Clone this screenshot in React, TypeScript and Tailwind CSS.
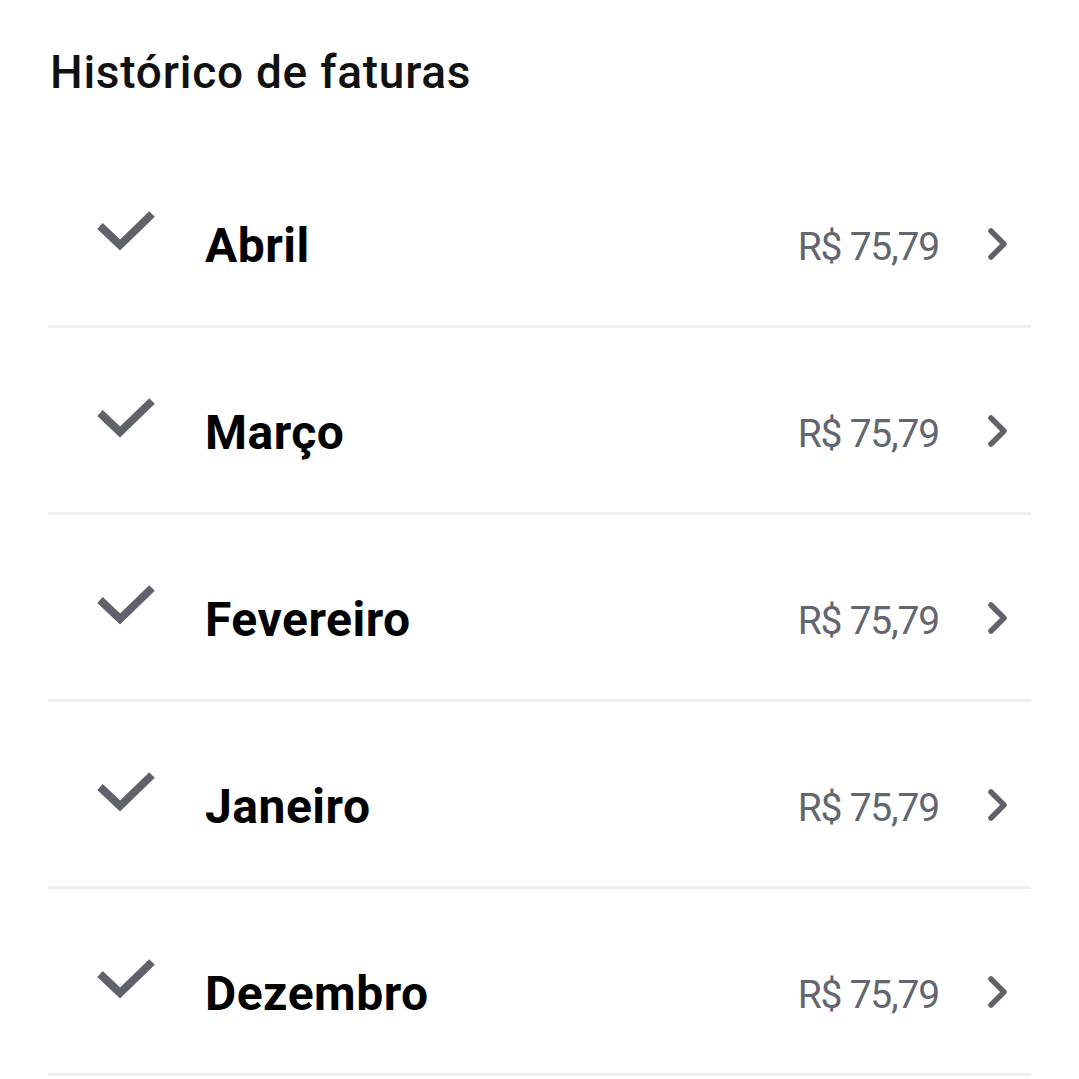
import React from "react";

const months = ["Abril", "Março", "Fevereiro", "Janeiro", "Dezembro"];

function Check() {
  return (
    <svg width="58" height="42" viewBox="0 0 58 42" fill="none" className="shrink-0">
      <polyline points="3,17 23,36 55,5" stroke="#5f626a" strokeWidth="8" strokeLinecap="butt" strokeLinejoin="miter" />
    </svg>
  );
}

function Chevron() {
  return (
    <svg width="21" height="34" viewBox="0 0 21 34" fill="none" className="shrink-0">
      <polyline points="4,4 17,17 4,30" stroke="#5f626a" strokeWidth="5.5" strokeLinecap="round" strokeLinejoin="round" />
    </svg>
  );
}

export default function App() {
  return (
    <div className="min-h-[1079px] w-[1079px] bg-white px-12 pt-[49px]" style={{ fontFamily: "Roboto, 'Noto Sans', sans-serif" }}>
      <h1 className="text-[46px] leading-[46px] font-medium tracking-[0.75px] text-[#111111] ml-[2px]">Histórico de faturas</h1>
      <div className="mt-[46px]">
        {months.map((m) => (
          <div key={m} className="flex h-[187px] items-start border-b-[3px] border-[#eeeeee]">
            <div className="ml-[49px] mt-[68px]">
              <Check />
            </div>
            <div className="ml-[50px] mt-[81px] text-[48px] leading-[48px] font-bold tracking-[0.5px] text-black flex-1">{m}</div>
            <div className="mt-[86px] text-[39px] leading-[40px] tracking-[-1.2px] text-[#63666e]">R$ 75,79</div>
            <div className="ml-[48px] mr-[23px] mt-[86px]">
              <Chevron />
            </div>
          </div>
        ))}
      </div>
    </div>
  );
}
